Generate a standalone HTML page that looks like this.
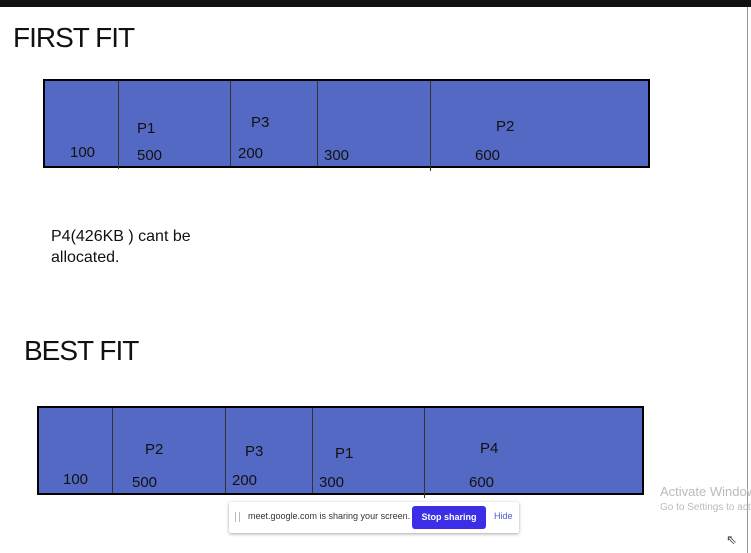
<!DOCTYPE html><html><head><style>
body{margin:0;width:751px;height:553px;background:#fff;position:relative;overflow:hidden;font-family:"Liberation Sans",sans-serif;color:#111}
.a{position:absolute;white-space:nowrap}
.box{position:absolute;background:#5469c4;border:2px solid #000;box-sizing:border-box}
.v{position:absolute;width:1px;background:#333}
.t{font-size:15px}
</style></head><body>
<div class="a" style="left:0;top:0;width:751px;height:7px;background:#111"></div>
<div class="a" style="left:747px;top:7px;width:1px;height:546px;background:#999"></div>
<div class="a" style="left:13px;top:22px;font-size:28px;letter-spacing:-1px">FIRST FIT</div>
<div class="box" style="left:43px;top:79px;width:607px;height:89px"></div>
<div class="v" style="left:118px;top:81px;height:88px"></div>
<div class="v" style="left:230px;top:81px;height:85px"></div>
<div class="v" style="left:317px;top:81px;height:85px"></div>
<div class="v" style="left:430px;top:81px;height:90px"></div>
<div class="a t" style="left:70px;top:144px">100</div>
<div class="a t" style="left:137px;top:120px">P1</div>
<div class="a t" style="left:137px;top:147px">500</div>
<div class="a t" style="left:251px;top:114px">P3</div>
<div class="a t" style="left:238px;top:145px">200</div>
<div class="a t" style="left:324px;top:147px">300</div>
<div class="a t" style="left:496px;top:118px">P2</div>
<div class="a t" style="left:475px;top:147px">600</div>
<div class="a" style="left:51px;top:226px;font-size:16px;line-height:21px">P4(426KB ) cant be<br>allocated.</div>
<div class="a" style="left:24px;top:335px;font-size:28px;letter-spacing:-1px">BEST FIT</div>
<div class="box" style="left:37px;top:406px;width:607px;height:89px"></div>
<div class="v" style="left:112px;top:408px;height:85px"></div>
<div class="v" style="left:225px;top:408px;height:85px"></div>
<div class="v" style="left:312px;top:408px;height:85px"></div>
<div class="v" style="left:424px;top:408px;height:90px"></div>
<div class="a t" style="left:63px;top:471px">100</div>
<div class="a t" style="left:145px;top:441px">P2</div>
<div class="a t" style="left:132px;top:474px">500</div>
<div class="a t" style="left:245px;top:443px">P3</div>
<div class="a t" style="left:232px;top:472px">200</div>
<div class="a t" style="left:335px;top:445px">P1</div>
<div class="a t" style="left:319px;top:474px">300</div>
<div class="a t" style="left:480px;top:440px">P4</div>
<div class="a t" style="left:469px;top:474px">600</div>
<div class="a" style="left:229px;top:502px;width:290px;height:31px;background:#fff;box-shadow:0 1px 3px rgba(0,0,0,.35);border-radius:2px"></div>
<div class="a" style="left:235px;top:512px;width:3px;height:10px;border-left:1px solid #bbb;border-right:1px solid #bbb"></div>
<div class="a" style="left:248px;top:511px;font-size:9px;color:#333">meet.google.com is sharing your screen.</div>
<div class="a" style="left:412px;top:506px;width:74px;height:23px;background:#3b2ee6;border-radius:3px;color:#fff;font-size:9px;font-weight:bold;text-align:center;line-height:23px">Stop sharing</div>
<div class="a" style="left:494px;top:511px;font-size:9px;color:#4a5bd6">Hide</div>
<div class="a" style="left:660px;top:484px;font-size:13px;color:#bbb">Activate Windows</div>
<div class="a" style="left:660px;top:502px;font-size:10px;color:#bbb">Go to Settings to activate</div>
<div class="a" style="left:726px;top:532px;font-size:13px;color:#444">⇖</div>
</body></html>
